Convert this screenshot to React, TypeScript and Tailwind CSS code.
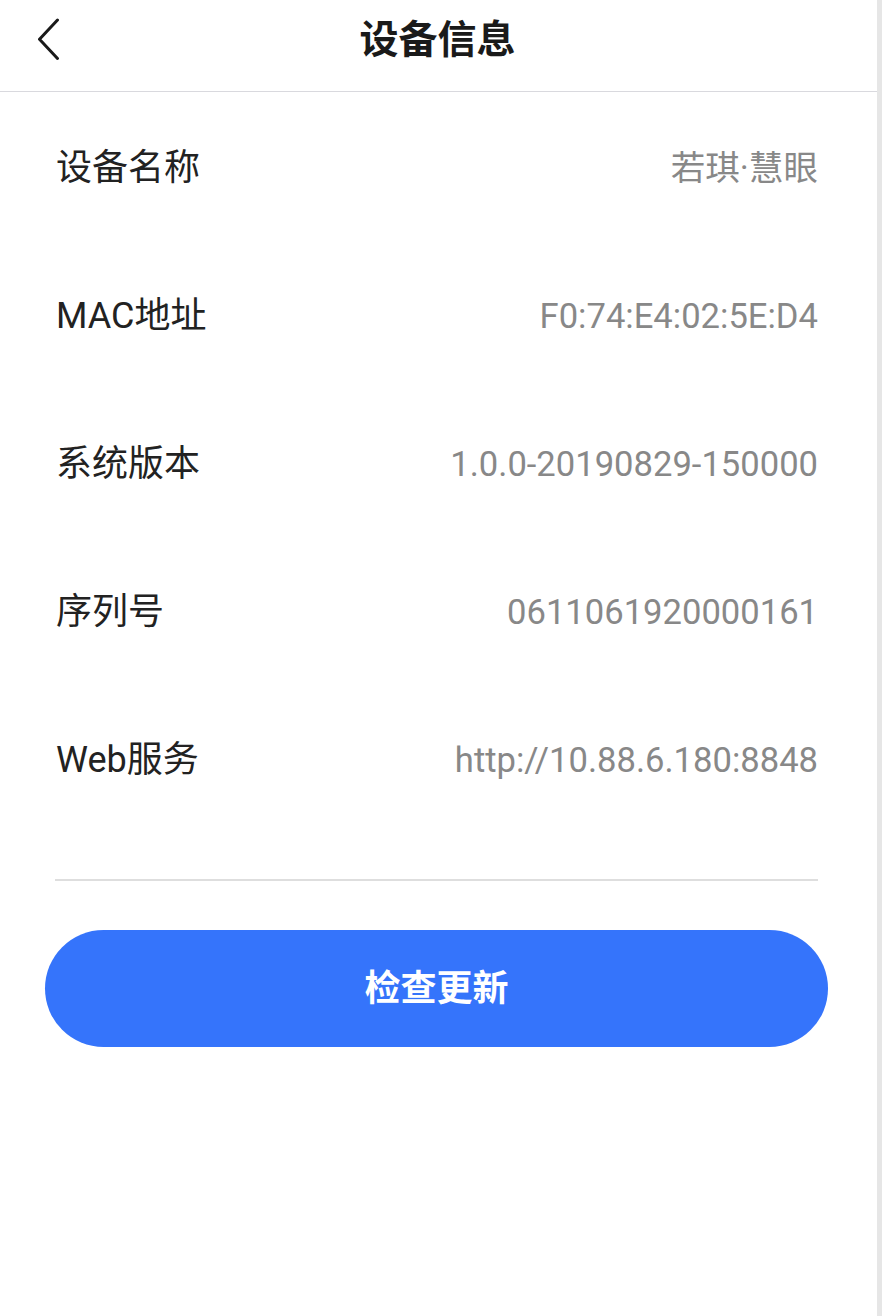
import React from "react";

const rows: [string, string][] = [
  ["设备名称", "若琪·慧眼"],
  ["MAC地址", "F0:74:E4:02:5E:D4"],
  ["系统版本", "1.0.0-20190829-150000"],
  ["序列号", "0611061920000161"],
  ["Web服务", "http://10.88.6.180:8848"],
];

export default function App() {
  return (
    <div
      className="flex h-[1316px] w-[882px] bg-white"
      style={{ fontFamily: 'Roboto, "Noto Sans CJK SC", sans-serif' }}
    >
      <div className="flex w-[877px] flex-col">
        <div className="relative h-[92px] border-b border-[#d9d9de]">
          <div className="relative flex h-[80px] items-center justify-center">
            <svg
              className="absolute left-[36px] top-[18px]"
              width="26"
              height="44"
              viewBox="0 0 26 44"
            >
              <path
                d="M21.5 2 L3.5 21.3 L21.5 40.5"
                fill="none"
                stroke="#1a1a1a"
                strokeWidth="3"
                strokeLinecap="round"
                strokeLinejoin="round"
              />
            </svg>
            <span className="ml-[-2px] text-[39px] font-bold leading-none text-[#1a1a1a]">
              设备信息
            </span>
          </div>
        </div>
        <div className="mt-[2px] flex flex-col pl-[56px] pr-[59px]">
          {rows.map(([label, value]) => (
            <div key={label} className="flex h-[148px] items-center justify-between">
              <span className="text-[36px] leading-none text-[#222222]">{label}</span>
              <span className="text-[34.6px] leading-none text-[#888888]">{value}</span>
            </div>
          ))}
        </div>
        <div className="ml-[55px] mr-[59px] mt-[45px] h-[2px] bg-[#dedede]" />
        <div className="px-[45px] pt-[49px]">
          <button className="flex h-[117px] w-[783px] items-center justify-center rounded-full bg-[#3574fb] text-[36px] font-bold leading-none text-white">
            检查更新
          </button>
        </div>
      </div>
      <div className="h-full w-[5px] bg-[#e6e6e6]" />
    </div>
  );
}
